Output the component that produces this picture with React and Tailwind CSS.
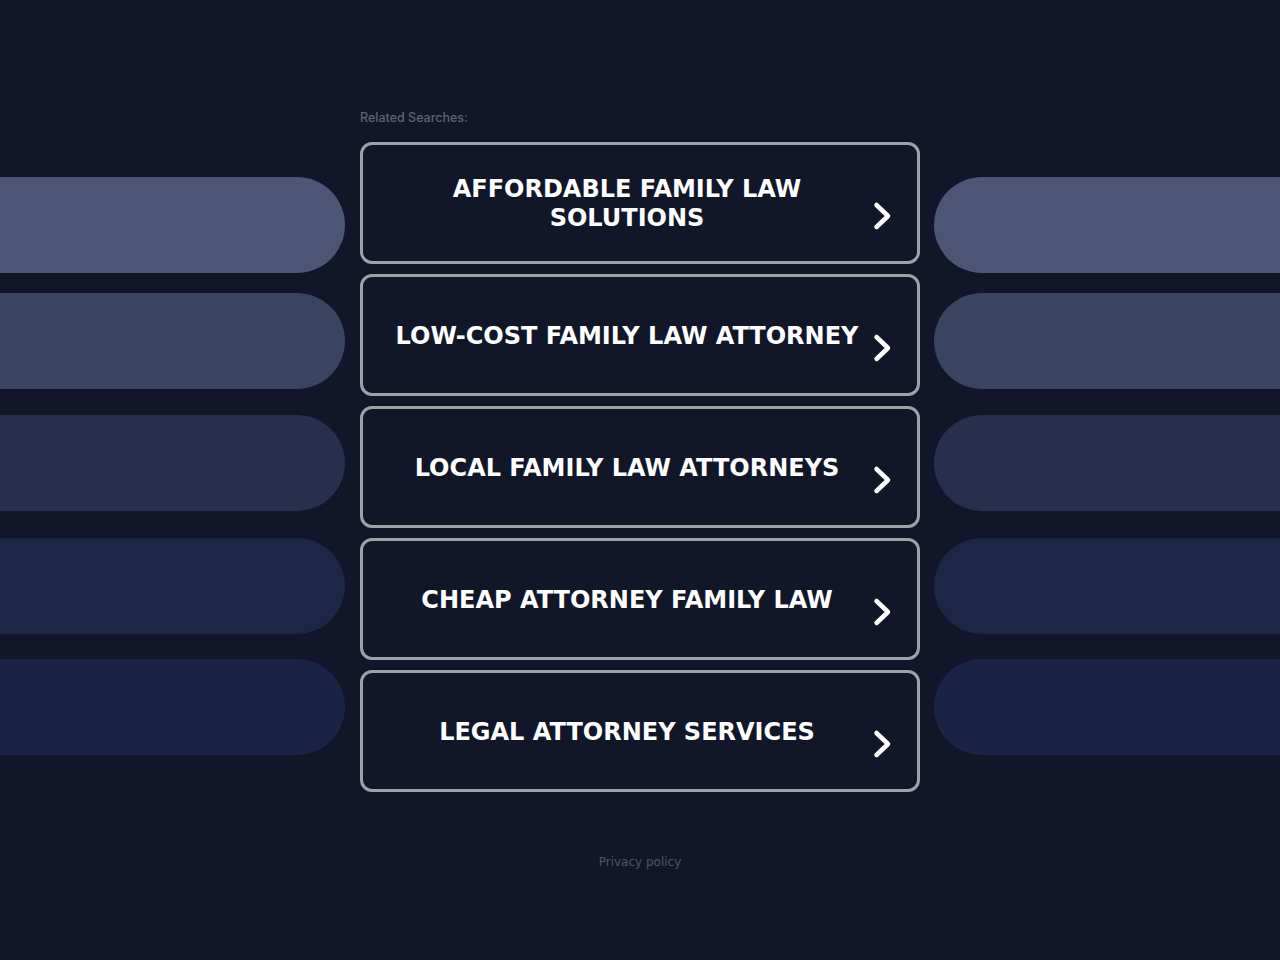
import React from 'react';

const searches = [
    'Affordable Family Law Solutions',
    'Low-Cost Family Law Attorney',
    'Local Family Law Attorneys',
    'Cheap Attorney Family Law',
    'Legal Attorney Services',
];

// side pills: colour + top margin, read off the screenshot
const pills = [
    { bg: 'bg-[#4c5574]', mt: 'mt-[177px]' },
    { bg: 'bg-[#3a4360]', mt: 'mt-[20px]' },
    { bg: 'bg-[#272f4c]', mt: 'mt-[26px]' },
    { bg: 'bg-[#1e2646]', mt: 'mt-[27px]' },
    { bg: 'bg-[#1c2445]', mt: 'mt-[25px]' },
];

const Chevron = () => (
    <svg width="21" height="30" viewBox="0 0 21 30" fill="none" className="shrink-0 mt-[26px]">
        <path d="M4.5 4 L16 15 L4.5 26" stroke="white" strokeWidth="4.5" strokeLinecap="round" strokeLinejoin="round" />
    </svg>
);

const App = () => {
    return (
        <div className="min-h-screen w-full bg-[#111729] overflow-hidden">
            <div className="flex w-full">
                {/* left decorative pills */}
                <div className="w-[345px] shrink-0 flex flex-col">
                    {pills.map((p, i) => (
                        <div key={i} className={`h-[96px] w-full rounded-r-full ${p.bg} ${p.mt}`}></div>
                    ))}
                </div>

                {/* center column */}
                <div className="w-[560px] shrink-0 ml-[15px] pt-[110px] flex flex-col">
                    <div className="text-[12.5px] leading-[16px] text-[#5b6377] font-medium mb-[16px]" style={{ fontFamily: 'Inter, sans-serif' }}>
                        Related Searches:
                    </div>
                    <div className="flex flex-col gap-[10px]">
                        {searches.map((s) => (
                            <a
                                key={s}
                                href="#"
                                className="h-[122px] flex items-center border-[3px] border-[#a0a1a8] rounded-[12px] pl-[27px] pr-[24px] gap-2 bg-[#111729]"
                            >
                                <span
                                    className="flex-1 text-center uppercase text-white font-bold text-[24px] leading-[29px] mt-[2px]"
                                    style={{ fontFamily: '"DejaVu Sans", sans-serif' }}
                                >
                                    {s}
                                </span>
                                <Chevron />
                            </a>
                        ))}
                    </div>
                    <div
                        className="mt-[62px] text-center text-[12px] leading-[16px] text-[#4d5568]"
                        style={{ fontFamily: '"DejaVu Sans", sans-serif' }}
                    >
                        Privacy policy
                    </div>
                </div>

                {/* right decorative pills */}
                <div className="flex-1 ml-[14px] flex flex-col">
                    {pills.map((p, i) => (
                        <div key={i} className={`h-[96px] w-full rounded-l-full ${p.bg} ${p.mt}`}></div>
                    ))}
                </div>
            </div>
        </div>
    );
};

export default App;
